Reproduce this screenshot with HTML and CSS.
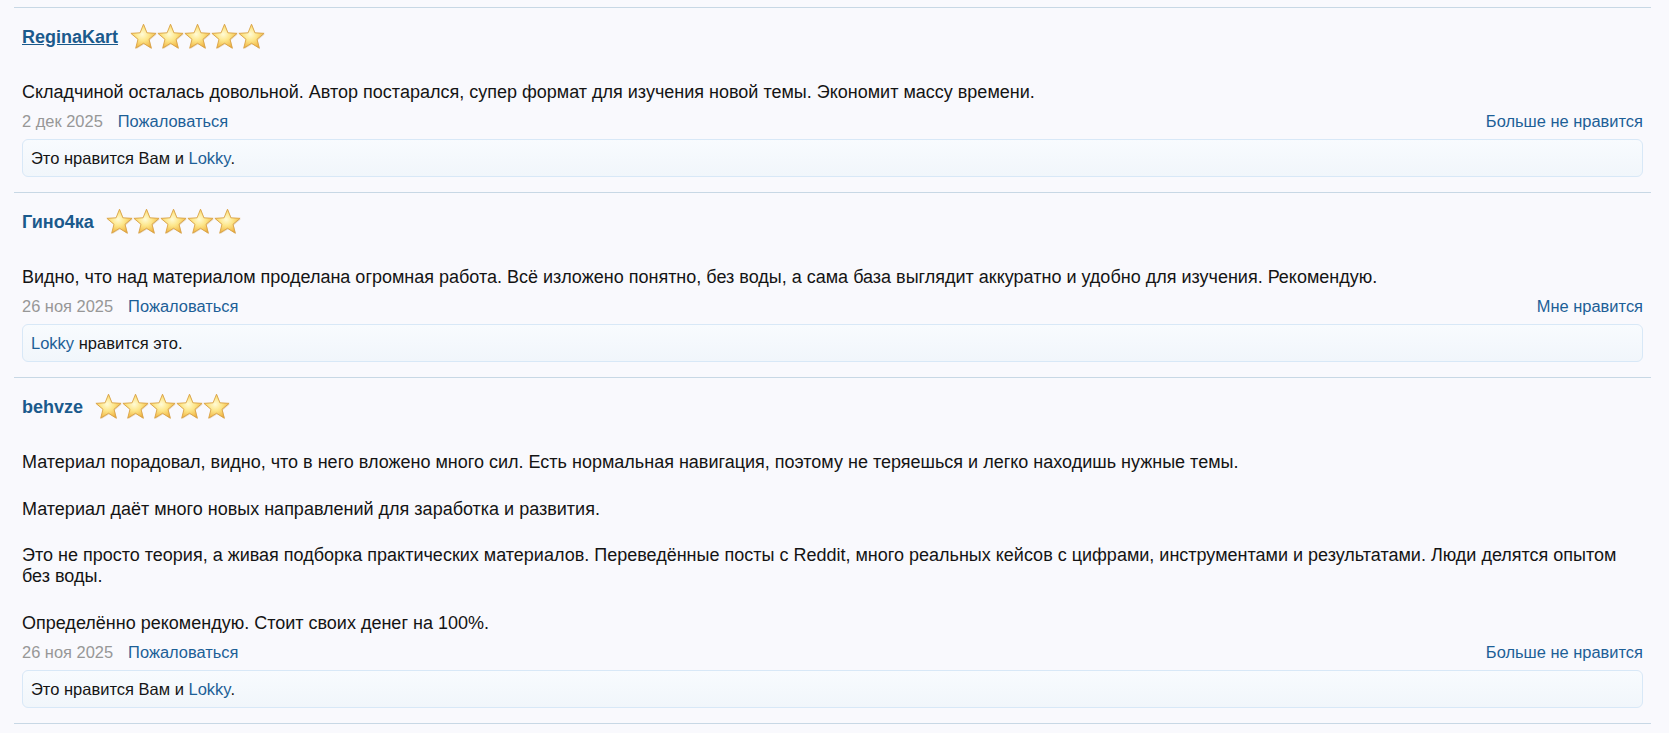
FILE: index.html
```html
<!DOCTYPE html>
<html lang="ru">
<head>
<meta charset="utf-8">
<title>Отзывы</title>
<link rel="stylesheet" href="styles.css">
</head>
<body>
<svg width="0" height="0" class="defs" aria-hidden="true">
  <defs>
    <radialGradient id="starFill" cx="0.45" cy="0.42" r="0.6">
      <stop offset="0" stop-color="#fffbd6"/>
      <stop offset="0.45" stop-color="#fde68a"/>
      <stop offset="0.85" stop-color="#f4c154"/>
      <stop offset="1" stop-color="#eaa93a"/>
    </radialGradient>
    <symbol id="star" viewBox="0 0 27 27">
      <path d="M13.5 1.2L16.91 9.81 26.1 10.33 19.02 16.29 21.3 25.2 13.5 20.3 5.7 25.2 7.98 16.29 .9 10.33 10.09 9.81z" fill="#b98a3a" opacity="0.3" transform="translate(0.7 0.9)"/>
      <path d="M13.5 1.2L16.91 9.81 26.1 10.33 19.02 16.29 21.3 25.2 13.5 20.3 5.7 25.2 7.98 16.29 .9 10.33 10.09 9.81z" fill="url(#starFill)" stroke="#d9a244" stroke-width="0.9" stroke-linejoin="round"/>
    </symbol>
  </defs>
</svg>
<ol class="reviews">
  <li class="review">
    <div class="head">
      <a class="user hovered" href="#">ReginaKart</a>
      <span class="stars"><svg><use href="#star"/></svg><svg><use href="#star"/></svg><svg><use href="#star"/></svg><svg><use href="#star"/></svg><svg><use href="#star"/></svg></span>
    </div>
    <div class="body">
      <p>Складчиной осталась довольной. Автор постарался, супер формат для изучения новой темы. Экономит массу времени.</p>
    </div>
    <div class="meta">
      <span class="left"><span class="date">2 дек 2025</span><a href="#">Пожаловаться</a></span>
      <a href="#">Больше не нравится</a>
    </div>
    <div class="likes">Это нравится Вам и <a href="#">Lokky</a>.</div>
  </li>
  <li class="review">
    <div class="head">
      <a class="user" href="#">Гино4ка</a>
      <span class="stars"><svg><use href="#star"/></svg><svg><use href="#star"/></svg><svg><use href="#star"/></svg><svg><use href="#star"/></svg><svg><use href="#star"/></svg></span>
    </div>
    <div class="body">
      <p>Видно, что над материалом проделана огромная работа. Всё изложено понятно, без воды, а сама база выглядит аккуратно и удобно для изучения. Рекомендую.</p>
    </div>
    <div class="meta">
      <span class="left"><span class="date">26 ноя 2025</span><a href="#">Пожаловаться</a></span>
      <a href="#">Мне нравится</a>
    </div>
    <div class="likes"><a href="#">Lokky</a> нравится это.</div>
  </li>
  <li class="review">
    <div class="head">
      <a class="user" href="#">behvze</a>
      <span class="stars"><svg><use href="#star"/></svg><svg><use href="#star"/></svg><svg><use href="#star"/></svg><svg><use href="#star"/></svg><svg><use href="#star"/></svg></span>
    </div>
    <div class="body">
      <p>Материал порадовал, видно, что в него вложено много сил. Есть нормальная навигация, поэтому не теряешься и легко находишь нужные темы.</p>
      <p>Материал даёт много новых направлений для заработка и развития.</p>
      <p>Это не просто теория, а живая подборка практических материалов. Переведённые посты с Reddit, много реальных кейсов с цифрами, инструментами и результатами. Люди делятся опытом без воды.</p>
      <p>Определённо рекомендую. Стоит своих денег на 100%.</p>
    </div>
    <div class="meta">
      <span class="left"><span class="date">26 ноя 2025</span><a href="#">Пожаловаться</a></span>
      <a href="#">Больше не нравится</a>
    </div>
    <div class="likes">Это нравится Вам и <a href="#">Lokky</a>.</div>
  </li>
</ol>
</body>
</html>
```

FILE: styles.css
```css
html, body {
  margin: 0;
  padding: 0;
  background: #f9f9fd;
}
body {
  font-family: "Liberation Sans", Arial, sans-serif;
  color: #141414;
  padding: 7px 18px 0 14px;
}
.defs {
  position: absolute;
  width: 0;
  height: 0;
}
a {
  color: #1d5f97;
  text-decoration: none;
}
.reviews {
  list-style: none;
  margin: 0;
  padding: 0;
  border-bottom: 1px solid #c8d8e5;
}
.review {
  border-top: 1px solid #c8d8e5;
  padding: 0 8px 15px 8px;
}
.head {
  display: flex;
  align-items: center;
  gap: 12px;
  margin-top: 15px;
  height: 27px;
}
.user {
  font-size: 18px;
  font-weight: bold;
  line-height: 24px;
  color: #1b5a8c;
}
.user.hovered {
  text-decoration: underline;
}
.stars {
  display: flex;
  height: 27px;
}
.stars svg {
  width: 27px;
  height: 27px;
  display: block;
}
.body {
  margin-top: 32px;
  font-size: 18px;
  line-height: 21px;
}
.body p {
  margin: 0;
}
.body p + p {
  margin-top: 25.5px;
}
.meta {
  display: flex;
  justify-content: space-between;
  font-size: 16.45px;
  line-height: 20px;
  margin-top: 8px;
}
.meta .left {
  display: flex;
  gap: 15px;
}
.date {
  color: #979797;
}
.likes {
  margin-top: 8px;
  height: 20px;
  padding: 8px 8px;
  font-size: 16.5px;
  line-height: 20px;
  border: 1px solid #d8e8f7;
  border-radius: 6px;
  background: linear-gradient(to bottom, #f8fbfe, #f1f6fb);
}
```
